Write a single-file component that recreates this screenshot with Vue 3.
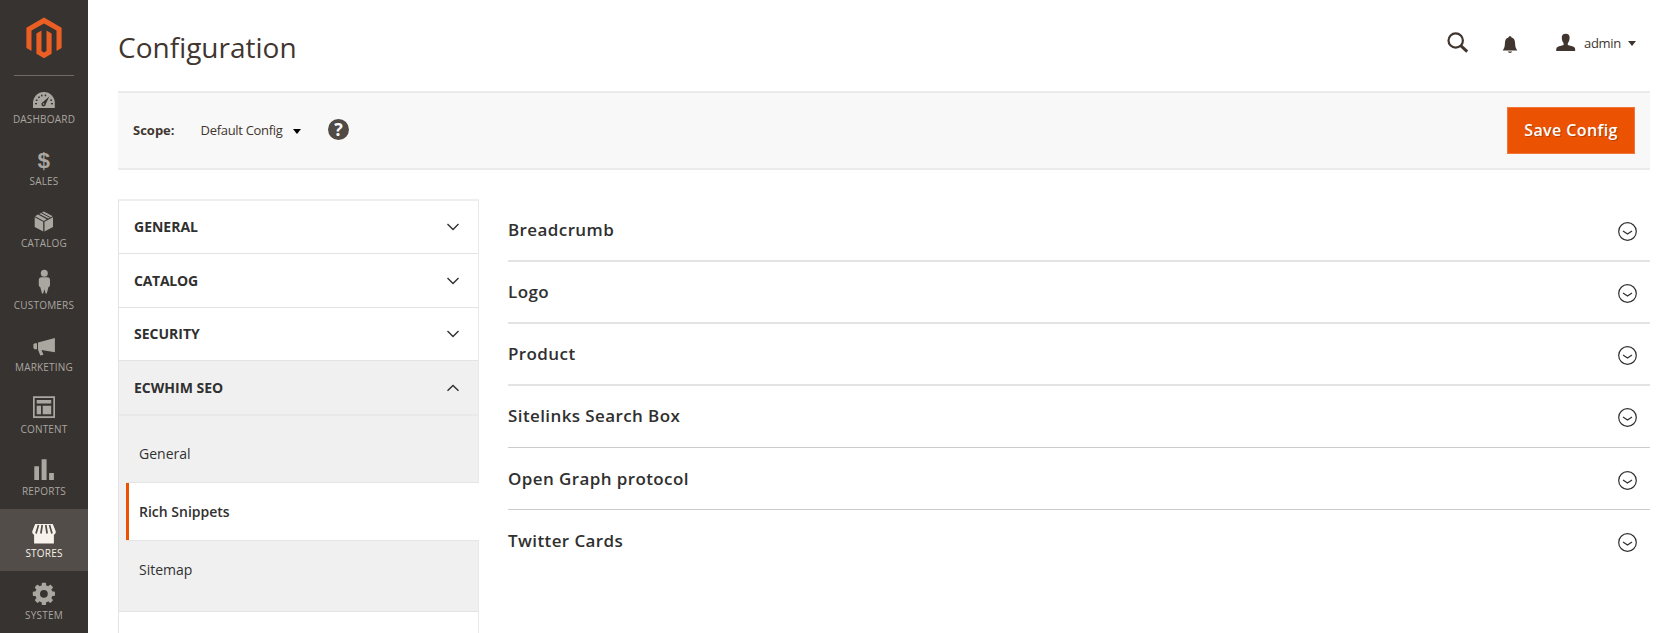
<script setup>
const menu = ['Dashboard', 'Sales', 'Catalog', 'Customers', 'Marketing', 'Content', 'Reports', 'Stores', 'System']
const groups = ['General', 'Catalog', 'Security']
const pages = ['General', 'Rich Snippets', 'Sitemap']
const sections = ['Breadcrumb', 'Logo', 'Product', 'Sitelinks Search Box', 'Open Graph protocol', 'Twitter Cards']
const teeth = [0, 45, 90, 135, 180, 225, 270, 315]
</script>

<template>
  <div class="page">
    <nav class="menu">
      <div class="brand">
        <svg width="36" height="42" viewBox="0 0 36 42">
          <path fill="#eb5f25" d="M18 .6 35.6 10.700V31L30.500 34V13.600L18 6.400 5.500 13.600V34L.4 31V10.700Z" />
          <path fill="#eb5f25" d="M10.400 16.500 15.500 13.500V34L18 35.500 20.500 34V13.500L25.600 16.500V36.800L18 41.200 10.400 36.800Z" />
        </svg>
      </div>
      <a v-for="name in menu" :key="name" class="item" :class="{ current: name === 'Stores' }">
        <svg class="glyph" width="88" height="36" viewBox="0 0 88 36" fill="currentColor">
          <g v-if="name === 'Dashboard'">
            <path d="M33 33V28a10.900 10.900 0 0 1 21.800 0V33Z" />
            <path class="cut" d="M49.300 21.500 45.800 29a2.200 2.200 0 1 1-3.200-1.800Z" />
            <circle cx="43.600" cy="29" r=".8" />
            <g class="cut">
              <rect x="35" y="28" width="2" height="1.300" /><rect x="35.800" y="24.500" width="1.700" height="1.500" />
              <rect x="38.200" y="21.500" width="1.600" height="1.600" /><rect x="41" y="19.700" width="1.500" height="1.700" />
              <rect x="44.700" y="19.500" width="1.500" height="1.700" /><rect x="50.300" y="24.500" width="1.700" height="1.500" />
              <rect x="51" y="28" width="2" height="1.300" />
            </g>
          </g>
          <text v-else-if="name === 'Sales'" class="dollar" x="43.700" y="30.500" text-anchor="middle">$</text>
          <g v-else-if="name === 'Catalog'">
            <path d="M34.700 18.300 43.200 22.800V32.600L34.700 28Z" /><path d="M53 18.300 44.500 22.800V32.600L53 28Z" />
            <path d="M35 17.200 38 15.600 46.800 20.300 43.800 21.900Z" /><path d="M39.400 14.900 43.800 12.400 52.700 17.200 48.200 19.600Z" />
            <path class="seam" d="M41.300 13.700 50.200 18.500" />
          </g>
          <g v-else-if="name === 'Customers'">
            <circle cx="44.300" cy="12.200" r="3.500" />
            <path d="M41.500 16.300H47.200C49.200 16.300 50 17.500 50 19.500V24.500L49 26H48.500L46.800 32.500H45.600L44.400 28.300 43.200 32.500H42L40.200 26H39.700L38.800 24.500V19.500C38.800 17.500 39.700 16.300 41.500 16.300Z" />
          </g>
          <g v-else-if="name === 'Marketing'">
            <path d="M33.400 21.500 34.600 20.300H37V26.300H34.600L33.400 25Z" /><path d="M38 19.500 54.900 15V29.300L41.500 27 43.500 31.800 40.300 32.500 38 26.700Z" />
          </g>
          <g v-else-if="name === 'Content'">
            <path fill-rule="evenodd" d="M33 11.200H55V33H33ZM34.700 12.900V31.300H53.300V12.900Z" />
            <path d="M36.700 15H51.200V18.500H36.700ZM36.700 20.700H41V29.300H36.700ZM42.700 20.700H51.200V29.300H42.700Z" />
          </g>
          <path v-else-if="name === 'Reports'" d="M34.300 19.200H39V33H34.300ZM41.600 12.300H46.600V33H41.600ZM49.100 26H53.900V33H49.100Z" />
          <g v-else-if="name === 'Stores'">
            <path d="M35.200 15H52.800L55.800 22.500C55.800 24.500 54.900 25.300 53.900 25.700V34.600H34.100V25.700C33.100 25.300 32.200 24.500 32.200 22.500Z" />
            <path class="stripe" d="M38.500 16 36 24.500M42.200 16 40.900 24.500M45.800 16 47.100 24.500M49.500 16 52 24.500" />
          </g>
          <g v-else>
            <rect v-for="a in teeth" :key="a" x="41.700" y="11.700" width="4.400" height="6" rx="1" :transform="`rotate(${a} 43.900 22.800)`" />
            <circle cx="43.900" cy="22.800" r="6.300" fill="none" stroke="currentColor" stroke-width="4.800" />
          </g>
        </svg>
        <span class="label">{{ name }}</span>
      </a>
    </nav>

    <div class="content">
      <header class="header">
        <h1>Configuration</h1>
        <div class="tools">
          <svg width="22" height="22" viewBox="0 0 22 22" fill="none" stroke="#41362f">
            <circle cx="8.700" cy="8.500" r="7.200" stroke-width="2.200" /><path d="M13.700 13.700 20.200 19.600" stroke-width="3" />
          </svg>
          <svg class="bell" width="16" height="18" viewBox="0 0 16 18" fill="#41362f">
            <path d="M8 .3C9.200.3 9.500 1 9.500 1.600 12.200 2.300 13 4.500 13.100 7.500 13.200 10.500 13.600 12.300 15.300 14.400H.7C2.400 12.300 2.800 10.500 2.900 7.500 3 4.500 3.800 2.300 6.500 1.600 6.500 1 6.800.3 8 .3ZM5.900 15.500H10.100C9.700 16.500 9 16.900 8 16.900S6.300 16.500 5.900 15.500Z" />
          </svg>
          <svg class="person" width="20" height="19" viewBox="0 0 20 19" fill="#41362f">
            <path d="M9.700.7C12.300.7 13.900 2.200 13.600 5 13.500 7.600 12.600 9.200 11.800 10.200V12C15.500 13 18 13.400 18.800 14.800 19.200 15.600 19.200 17 19.200 18H.2C.2 17 .2 15.600.6 14.800 1.400 13.400 4 13 7.600 12V10.200C6.800 9.200 5.900 7.600 5.800 5 5.500 2.200 7.100.7 9.700.7Z" />
          </svg>
          <span class="user">admin</span>
          <svg class="caret" width="8" height="5" viewBox="0 0 8 5"><path d="M0 0H8L4 5Z" fill="#41362f" /></svg>
        </div>
      </header>

      <div class="toolbar">
        <strong>Scope:</strong>
        <span class="scope">Default Config</span>
        <svg class="arrow" width="8" height="5" viewBox="0 0 8 5"><path d="M0 0H8L4 5Z" /></svg>
        <span class="help">?</span>
        <button>Save Config</button>
      </div>

      <div class="columns">
        <aside class="tabs">
          <div v-for="g in groups" :key="g" class="tab">
            <span>{{ g }}</span>
            <svg width="12" height="8" viewBox="0 0 12 8"><path d="M.5 1 6 6.400 11.500 1" /></svg>
          </div>
          <div class="tab open">
            <span>Ecwhim SEO</span>
            <svg width="12" height="8" viewBox="0 0 12 8"><path d="M.5 6.800 6 1.400 11.500 6.800" /></svg>
          </div>
          <div class="pages">
            <a v-for="p in pages" :key="p" :class="{ active: p === 'Rich Snippets' }">{{ p }}</a>
          </div>
        </aside>
        <main class="sections">
          <div v-for="s in sections" :key="s" class="section">
            <span>{{ s }}</span>
            <svg width="19" height="19" viewBox="0 0 19 19"><circle cx="9.500" cy="9.500" r="8.800" /><path d="M5 8.900 9.500 12 14 8.900" /></svg>
          </div>
        </main>
      </div>
    </div>
  </div>
</template>

<style>
body { overflow: hidden; }
</style>

<style scoped>
* { box-sizing: border-box; }
.page { display: flex; width: 1679px; height: 633px; overflow: hidden; background: #fff; color: #303030; font: 14px/20px "Open Sans", "Noto Sans", sans-serif; }
.menu { width: 88px; flex: none; background: #373330; }
.brand { height: 75px; padding: 17px 0 0 26px; }
.brand svg { display: block; }
.item { display: block; height: 62px; color: #aaa6a0; text-align: center; }
.item:nth-child(2) { background: linear-gradient(#736963, #736963) 14px 0 / 60px 1px no-repeat; }
.glyph { display: block; }
.cut { fill: #373330; }
.seam { stroke: #373330; stroke-width: 1; }
.stripe { stroke: #524d49; stroke-width: 1.7; }
.dollar { font: bold 22.500px "Liberation Sans", sans-serif; }
.label { display: block; font-size: 10px; line-height: 16px; text-transform: uppercase; letter-spacing: .2px; }
.current { background: #524d49; color: #f7f3eb; }
.content { width: 1532px; margin-left: 30px; }
.header { height: 91px; display: flex; justify-content: space-between; align-items: flex-start; }
h1 { margin: 29px 0 0; font-size: 28px; line-height: 36px; font-weight: 400; color: #41362f; }
.tools { display: flex; align-items: center; height: 22px; margin: 32px 14px 0 0; }
.bell { margin: 3px 0 0 33px; }
.person { margin: -2px 0 0 38px; }
.user { margin: -1px 7px 0 8px; font-size: 13px; letter-spacing: -.3px; color: #41362f; }
.toolbar { display: flex; align-items: center; height: 79px; padding: 0 15px 2px; background: #f8f8f8; border: solid #ebebeb; border-width: 2px 0; color: #41362f; font-size: 13px; }
.toolbar strong { width: 67.500px; font-weight: 700; }
.scope { width: 92px; letter-spacing: -.3px; }
.arrow { margin-top: 4px; }
.help { width: 21px; height: 21px; margin-left: 27.500px; border-radius: 50%; background: #514943; color: #f8f8f8; font-weight: 700; font-size: 18px; line-height: 21px; text-align: center; }
button { width: 128px; height: 46.500px; margin: 2px 0 0 auto; padding: 0 0 2px; border: 1px solid #f2763a; background: #eb5202; color: #fff; font: 600 16px/24px "Open Sans", sans-serif; letter-spacing: .4px; text-shadow: 1px 1px 0 rgba(0, 0, 0, .25); }
.columns { display: flex; align-items: flex-start; padding-top: 29px; }
.tabs { width: 360.500px; height: 440px; flex: none; border: 1px solid #e3e3e3; border-top: 2px solid #efefef; border-right: 1px solid #e9e9e9; }
.tab { display: flex; justify-content: space-between; align-items: center; height: 53.4px; padding: 0 18.500px 0 15px; border-bottom: 1px solid #e3e3e3; font-weight: 700; text-transform: uppercase; }
.tab svg, .section svg { fill: none; stroke: #303030; stroke-width: 1.4; }
.tab.open { height: 55px; background: #f0f0f0; border-bottom: 2px solid #e9e9e9; }
.tab:nth-child(2) { letter-spacing: -.25px; }
.pages { height: 196px; padding: 9px 0 13px 7px; background: #f0f0f0; border-bottom: 1px solid #e3e3e3; }
.pages a { display: block; height: 57px; padding: 19px 13px; }
.pages .active { height: 59px; margin-right: -1px; border: solid #e5e5e5; border-width: 1px 0; box-shadow: inset 3px 0 #eb5202; background: #fff; font-weight: 600; }
.sections { width: 1142px; margin-left: 29.500px; }
.section { display: flex; justify-content: space-between; height: 62.1px; padding: 19px 13px 0 0; border-bottom: 1px solid #ccc; font-size: 17px; line-height: 22px; font-weight: 600; letter-spacing: .4px; }
.section:first-child { height: 63px; padding-top: 20px; }
.section:nth-child(-n+3) { border-bottom: 2px solid #e3e3e3; }
.section:nth-child(n+5) { padding-top: 19.4px; }
.section:last-child { border: 0; }
.section svg { margin-top: 3px; stroke-width: 1.2; }
</style>
